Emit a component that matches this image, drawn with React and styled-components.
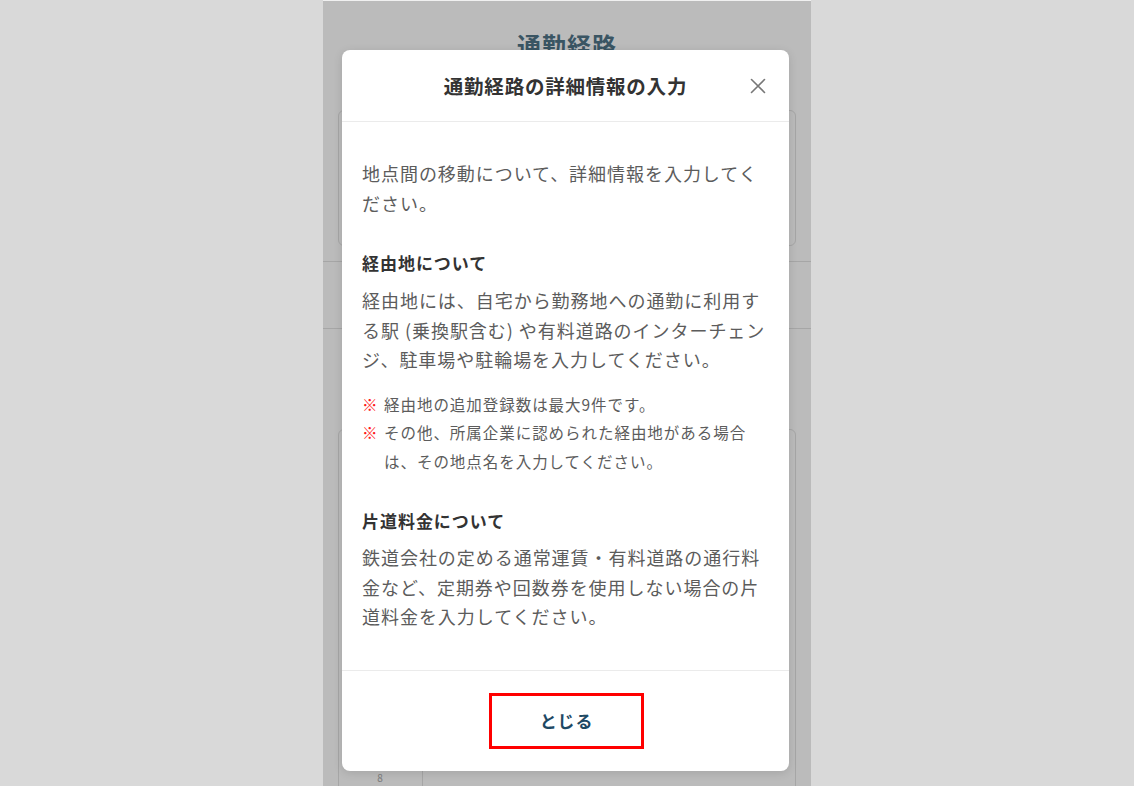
import React from "react";
import styled, { createGlobalStyle } from "styled-components";

const Global = createGlobalStyle`
  html, body { margin: 0; padding: 0; }
  body {
    background: #d9d9d9;
    font-family: "Noto Sans CJK JP", "Noto Sans", sans-serif;
    letter-spacing: 0.06em;
  }
`;

const Stage = styled.div`
  display: flex;
  justify-content: center;
  min-height: 786px;
`;

const Column = styled.div`
  position: relative;
  width: 488px;
  min-height: 786px;
  background: #ffffff;
  border-top: 1px solid #f0f0f0;
  box-sizing: border-box;
  overflow: hidden;
`;

const Page = styled.div`
  display: flex;
  flex-direction: column;
  padding-top: 24px;
`;

const PageTitle = styled.h1`
  margin: 0;
  text-align: center;
  font-size: 24px;
  line-height: 40px;
  font-weight: 700;
  color: #4f7488;
`;

const Card = styled.div`
  margin: 45px 15px 0;
  height: 134px;
  border: 1px solid #e3e3e3;
  border-radius: 6px;
`;

const Rule = styled.div`
  height: 1px;
  background: #e3e3e3;
  margin-top: ${(p) => p.$top}px;
`;

const LowerCard = styled.div`
  margin: 100px 15px 0;
  height: 380px;
  border: 1px solid #e3e3e3;
  border-radius: 6px;
  display: grid;
  grid-template-columns: 84px 1fr;
  align-items: end;
`;

const Cell = styled.div`
  height: 40px;
  border-right: 1px solid #e3e3e3;
  font-size: 10px;
  color: #aaa;
  text-align: center;
`;

const Overlay = styled.div`
  position: absolute;
  inset: 0;
  background: rgba(0, 0, 0, 0.265);
`;

const Modal = styled.div`
  position: absolute;
  top: 49px;
  left: 19px;
  width: 447px;
  background: #ffffff;
  border-radius: 8px;
  box-shadow: 0 2px 10px rgba(0, 0, 0, 0.12);
  display: flex;
  flex-direction: column;
`;

const Header = styled.div`
  height: 72px;
  display: grid;
  grid-template-columns: 62px 1fr 62px;
  align-items: center;
  border-bottom: 1px solid #ebebeb;
  box-sizing: border-box;
`;

const Title = styled.h2`
  grid-column: 2;
  margin: 0;
  text-align: center;
  font-size: 19.5px;
  font-weight: 700;
  color: #333333;
  letter-spacing: 0.04em;
`;

const CloseButton = styled.button`
  grid-column: 3;
  justify-self: center;
  border: none;
  background: none;
  padding: 0;
  width: 20px;
  height: 20px;
  display: flex;
  align-items: center;
  justify-content: center;
  cursor: pointer;
`;

const Body = styled.div`
  padding: 37px 20px 38px;
  display: flex;
  flex-direction: column;
`;

const Para = styled.p`
  margin: 0;
  font-size: 18px;
  line-height: 29.5px;
  color: #5c5c5c;
  margin-top: ${(p) => p.$gap || 0}px;
`;

const Heading = styled.h3`
  margin: 0;
  margin-top: ${(p) => p.$gap || 0}px;
  font-size: 17px;
  line-height: 29px;
  font-weight: 700;
  color: #333333;
`;

const Notes = styled.ul`
  list-style: none;
  margin: 15px 0 0;
  padding: 0;
`;

const Note = styled.li`
  position: relative;
  padding-left: 22px;
  font-size: 15.5px;
  line-height: 28.5px;
  color: #5c5c5c;
`;

const Mark = styled.span`
  position: absolute;
  left: 0;
  top: 0;
  color: #ff1a1a;
  font-weight: 700;
`;

const Footer = styled.div`
  border-top: 1px solid #ebebeb;
  padding: 22px 0 22px;
  display: flex;
  justify-content: center;
`;

const CloseAction = styled.button`
  width: 155px;
  height: 56px;
  margin-left: 2px;
  border: 3px solid #ff0000;
  background: #ffffff;
  font-family: inherit;
  font-size: 17px;
  font-weight: 700;
  color: #1e4964;
  letter-spacing: 0.05em;
  cursor: pointer;
`;

export default function App() {
  return (
    <>
      <Global />
      <Stage>
        <Column>
          <Page>
            <PageTitle>通勤経路</PageTitle>
            <Card />
            <Rule $top={15} />
            <Rule $top={66} />
            <LowerCard>
              <Cell>8</Cell>
              <div />
            </LowerCard>
          </Page>
          <Overlay />
          <Modal>
            <Header>
              <Title>通勤経路の詳細情報の入力</Title>
              <CloseButton aria-label="閉じる">
                <svg width="16" height="16" viewBox="0 0 16 16">
                  <path d="M1.5 1.5 L14.5 14.5 M14.5 1.5 L1.5 14.5" stroke="#777" strokeWidth="1.6" strokeLinecap="round" />
                </svg>
              </CloseButton>
            </Header>
            <Body>
              <Para>地点間の移動について、詳細情報を入力してください。</Para>
              <Heading $gap={30}>経由地について</Heading>
              <Para $gap={9}>
                経由地には、自宅から勤務地への通勤に利用する駅 (乗換駅含む) や有料道路のインターチェンジ、駐車場や駐輪場を入力してください。
              </Para>
              <Notes>
                <Note>
                  <Mark>※</Mark>経由地の追加登録数は最大9件です。
                </Note>
                <Note>
                  <Mark>※</Mark>その他、所属企業に認められた経由地がある場合は、その地点名を入力してください。
                </Note>
              </Notes>
              <Heading $gap={31}>片道料金について</Heading>
              <Para $gap={8}>
                鉄道会社の定める通常運賃・有料道路の通行料金など、定期券や回数券を使用しない場合の片道料金を入力してください。
              </Para>
            </Body>
            <Footer>
              <CloseAction>とじる</CloseAction>
            </Footer>
          </Modal>
        </Column>
      </Stage>
    </>
  );
}
